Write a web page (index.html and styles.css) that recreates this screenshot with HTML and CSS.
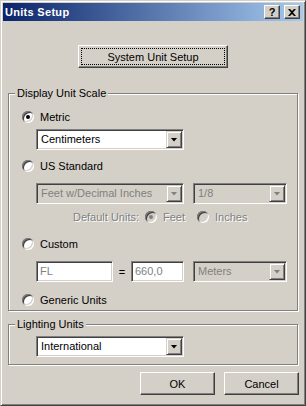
FILE: index.html
```html
<!DOCTYPE html>
<html lang="en">
<head>
  <meta charset="UTF-8">
  <title>Units Setup</title>
  <link rel="stylesheet" href="styles.css">
</head>
<body>

  <div class="window">
    <!-- title bar -->
    <div class="titlebar">
      <span class="title">Units Setup</span>
      <div class="caption-btns">
        <span class="cap-btn">?</span>
        <span class="cap-btn">
          <svg width="8" height="7" viewBox="0 0 8 7"><path d="M0 0h2l2 2 2-2h2L5 3.5 8 7H6L4 5 2 7H0l3-3.5z" fill="#000"/></svg>
        </span>
      </div>
    </div>

    <div class="content">
      <div class="sys-row">
        <div class="btn btn-sys"><span class="focus">System Unit Setup</span></div>
      </div>

      <!-- display unit scale -->
      <fieldset class="group group-scale">
        <legend>Display Unit Scale</legend>

        <div class="opt opt-metric"><span class="radio checked"></span>Metric</div>
        <div class="line line-metric">
          <div class="combo w148"><span class="combo-text">Centimeters</span><span class="combo-btn"></span></div>
        </div>

        <div class="opt opt-us"><span class="radio"></span>US Standard</div>
        <div class="line line-us">
          <div class="combo w148 disabled"><span class="combo-text">Feet w/Decimal Inches</span><span class="combo-btn"></span></div>
          <div class="combo w94 disabled"><span class="combo-text">1/8</span><span class="combo-btn"></span></div>
        </div>
        <div class="defaults">
          <span class="dim def-label">Default Units:</span>
          <span class="radio disabled checked"></span>
          <span class="dim def-feet">Feet</span>
          <span class="radio disabled"></span>
          <span class="dim def-inches">Inches</span>
        </div>

        <div class="opt opt-custom"><span class="radio"></span>Custom</div>
        <div class="line line-custom">
          <div class="field w77">FL</div>
          <span class="eq">=</span>
          <div class="field w53">660,0</div>
          <div class="combo w94 disabled"><span class="combo-text">Meters</span><span class="combo-btn"></span></div>
        </div>

        <div class="opt opt-generic"><span class="radio"></span>Generic Units</div>
      </fieldset>

      <!-- lighting units -->
      <fieldset class="group group-light">
        <legend>Lighting Units</legend>
        <div class="line line-light">
          <div class="combo w148"><span class="combo-text">International</span><span class="combo-btn"></span></div>
        </div>
      </fieldset>

      <div class="actions">
        <div class="btn btn-action">OK</div>
        <div class="btn btn-action">Cancel</div>
      </div>
    </div>
  </div>

</body>
</html>
```

FILE: styles.css
```css
/* base */
* { box-sizing: border-box; margin:0; padding:0; }
body {
  font: 11px "Liberation Sans", Arial, sans-serif;
  color:#000; background:#d4d0c8;
}

/* window frame */
.window {
  width:306px; height:406px;
  background:#d4d0c8;
  border:1px solid; border-color:#d4d0c8 #404040 #404040 #d4d0c8;
  box-shadow: inset 1px 1px #fff, inset -1px -1px #808080;
  padding:2px;
}

.titlebar {
  height:18px;
  display:flex; align-items:center; justify-content:space-between;
  padding:0 3px 0 2px;
  background:linear-gradient(to right, #0a246a, #a6caf0);
}
.title { color:#fff; font-weight:bold; letter-spacing:0.3px; }
.caption-btns { display:flex; gap:4px; }
.cap-btn {
  width:16px; height:14px;
  display:flex; align-items:center; justify-content:center;
  background:#d4d0c8;
  border:1px solid; border-color:#fff #404040 #404040 #fff;
  box-shadow: inset -1px -1px #808080;
  font-weight:bold; font-size:11px; line-height:1;
}

.content { padding:0 5px; }

/* buttons */
.btn {
  display:flex; align-items:center; justify-content:center;
  height:23px;
  background:#d4d0c8;
  border:1px solid; border-color:#fff #404040 #404040 #fff;
  box-shadow: inset -1px -1px #808080;
}
.sys-row { display:flex; justify-content:center; margin-top:24px; }
.btn-sys { width:150px; padding:2px; }
.btn-sys .focus {
  flex:1; align-self:stretch;
  display:flex; align-items:center; justify-content:center;
  border:1px dotted #000;
}

/* group boxes */
.group {
  border:1px solid #808080;
  box-shadow: inset 1px 1px #fff, 1px 1px #fff;
  min-width:0;
}
.group legend {
  margin-left:6px; padding:0 2px;
  line-height:13px; background:#d4d0c8;
}
.group-scale { margin-top:19px; padding-bottom:4px; }
.group-light { margin-top:7px; padding-bottom:7px; }

/* radio options */
.opt { display:flex; align-items:center; gap:6px; height:13px; padding-left:13px; }
.opt-metric  { margin-top:10px; }
.opt-us      { margin-top:9px; }
.opt-custom  { margin-top:14px; }
.opt-generic { margin-top:11px; }

.radio {
  position:relative;
  width:12px; height:12px; flex:none;
  border-radius:50%; background:#fff;
  box-shadow: inset 1px 1px #808080, inset -1px -1px #fff,
              inset 2px 2px #404040, inset -2px -2px #d4d0c8;
}
.radio.checked::after {
  content:''; position:absolute; top:4px; left:4px;
  width:4px; height:4px; border-radius:50%; background:#000;
}
.radio.disabled { background:#d4d0c8; }
.radio.disabled.checked::after { background:#808080; }

/* rows with combos and fields */
.line { display:flex; align-items:center; gap:9px; padding-left:27px; }
.line-metric { margin-top:6px; }
.line-us     { margin-top:11px; }
.line-custom { margin-top:11px; gap:0; }
.line-light  { margin-top:5px; }

.combo, .field {
  height:21px;
  background:#fff;
  border:1px solid; border-color:#808080 #fff #fff #808080;
  box-shadow: inset 1px 1px #404040, inset -1px -1px #d4d0c8;
}
.combo { display:flex; padding:1px; }
.combo-text { flex:1; padding-left:3px; line-height:17px; white-space:nowrap; overflow:hidden; }
.combo-btn {
  width:16px; height:17px;
  display:flex; align-items:center; justify-content:center;
  background:#d4d0c8;
  border:1px solid; border-color:#d4d0c8 #404040 #404040 #d4d0c8;
  box-shadow: inset 1px 1px #fff, inset -1px -1px #808080;
}
.combo-btn::after {
  content:''; width:7px; height:4px; background:#000;
  clip-path:polygon(0 0, 100% 0, 50% 100%);
}
.combo.disabled { background:#d4d0c8; }
.combo.disabled .combo-text { color:#808080; }
.combo.disabled .combo-btn::after { background:#808080; }

.field { padding:0 3px; line-height:19px; color:#808080; }

.w148 { width:148px; }
.w94  { width:94px; }
.w77  { width:77px; }
.w53  { width:53px; }
.eq { width:18px; text-align:center; }
.line-custom .combo { margin-left:9px; }

/* default units (disabled) */
.dim { color:#808080; text-shadow:1px 1px 0 #fff; }
.defaults { display:flex; align-items:center; height:13px; margin-top:6px; padding-left:64px; }
.def-label  { width:72px; }
.def-feet   { width:40px; padding-left:6px; }
.def-inches { padding-left:6px; }

/* OK / Cancel */
.actions { display:flex; justify-content:flex-end; gap:9px; margin-top:7px; margin-right:-1px; }
.btn-action { width:75px; }
```
